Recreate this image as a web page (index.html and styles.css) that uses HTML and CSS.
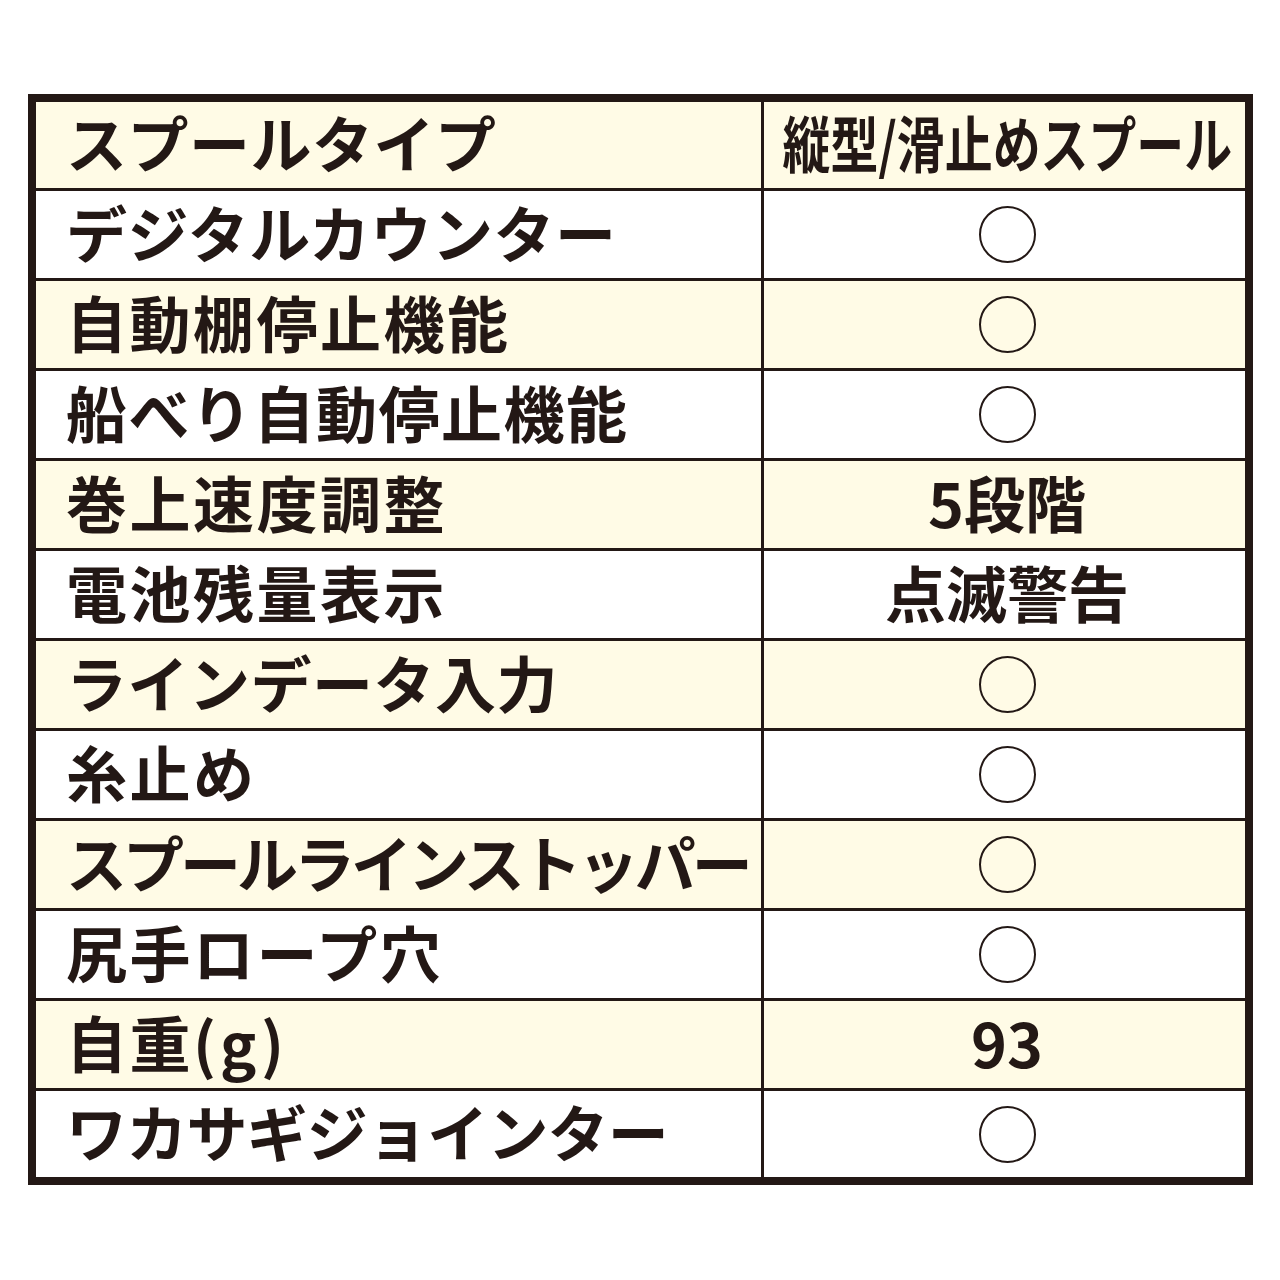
FILE: index.html
```html
<!DOCTYPE html>
<html lang="ja">
<head>
<meta charset="utf-8">
<link rel="stylesheet" href="styles.css">
</head>
<body>
<div class="table">
  <div class="row cream edge"><div class="label kana">スプールタイプ</div><div class="value"><span class="narrow">縦型/滑止めスプール</span></div></div>
  <div class="row"><div class="label kana">デジタルカウンター</div><div class="value"><span class="circle"></span></div></div>
  <div class="row cream"><div class="label">自動棚停止機能</div><div class="value"><span class="circle"></span></div></div>
  <div class="row"><div class="label mixed">船べり自動停止機能</div><div class="value"><span class="circle"></span></div></div>
  <div class="row cream"><div class="label">巻上速度調整</div><div class="value">5段階</div></div>
  <div class="row"><div class="label">電池残量表示</div><div class="value">点滅警告</div></div>
  <div class="row cream"><div class="label kana">ラインデータ入力</div><div class="value"><span class="circle"></span></div></div>
  <div class="row"><div class="label">糸止め</div><div class="value"><span class="circle"></span></div></div>
  <div class="row cream"><div class="label tight">スプールラインストッパー</div><div class="value"><span class="circle"></span></div></div>
  <div class="row"><div class="label">尻手ロープ穴</div><div class="value"><span class="circle"></span></div></div>
  <div class="row cream"><div class="label">自重<span class="paren">(g)</span></div><div class="value">93</div></div>
  <div class="row edge"><div class="label kana-narrow">ワカサギジョインター</div><div class="value"><span class="circle"></span></div></div>
</div>
</body>
</html>
```

FILE: styles.css
```css
html, body {
  margin: 0;
  padding: 0;
  background: #ffffff;
}
body {
  padding: 94px 0 0 28px;
  font-family: "Noto Sans CJK JP", "Noto Sans", sans-serif;
  color: #231815;
}
.table {
  width: 1209px;
  border: 8px solid #231815;
  display: flex;
  flex-direction: column;
}
.row {
  display: grid;
  grid-template-columns: 728px minmax(0, 1fr);
  height: 87px;
  background: #ffffff;
}
.row.edge {
  height: 86px;
}
.row + .row {
  border-top: 3px solid #231815;
}
.row.cream {
  background: #fffbe6;
}
.label {
  border-right: 3px solid #231815;
  display: flex;
  align-items: center;
  padding-left: 30px;
  padding-bottom: 7px;
  font-size: 61px;
  font-weight: 700;
  letter-spacing: 2.5px;
  line-height: 1;
  white-space: nowrap;
}
.label.kana {
  letter-spacing: 0.5px;
}
.label.mixed {
  letter-spacing: 1.5px;
}
.label.kana-narrow {
  letter-spacing: -0.8px;
}
.label.tight {
  letter-spacing: -4px;
}
.paren {
  letter-spacing: 4px;
}
.value {
  display: flex;
  align-items: center;
  justify-content: center;
  padding-left: 5px;
  font-size: 61px;
  font-weight: 700;
  line-height: 1;
  white-space: nowrap;
}
.value:not(:has(.circle)) {
  padding-bottom: 7px;
}
.narrow {
  flex: none;
  display: inline-block;
  width: max-content;
  transform: scaleX(0.785);
  transform-origin: center;
}
.circle {
  display: block;
  width: 53px;
  height: 53px;
  border: 2px solid #231815;
  border-radius: 50%;
}
```
